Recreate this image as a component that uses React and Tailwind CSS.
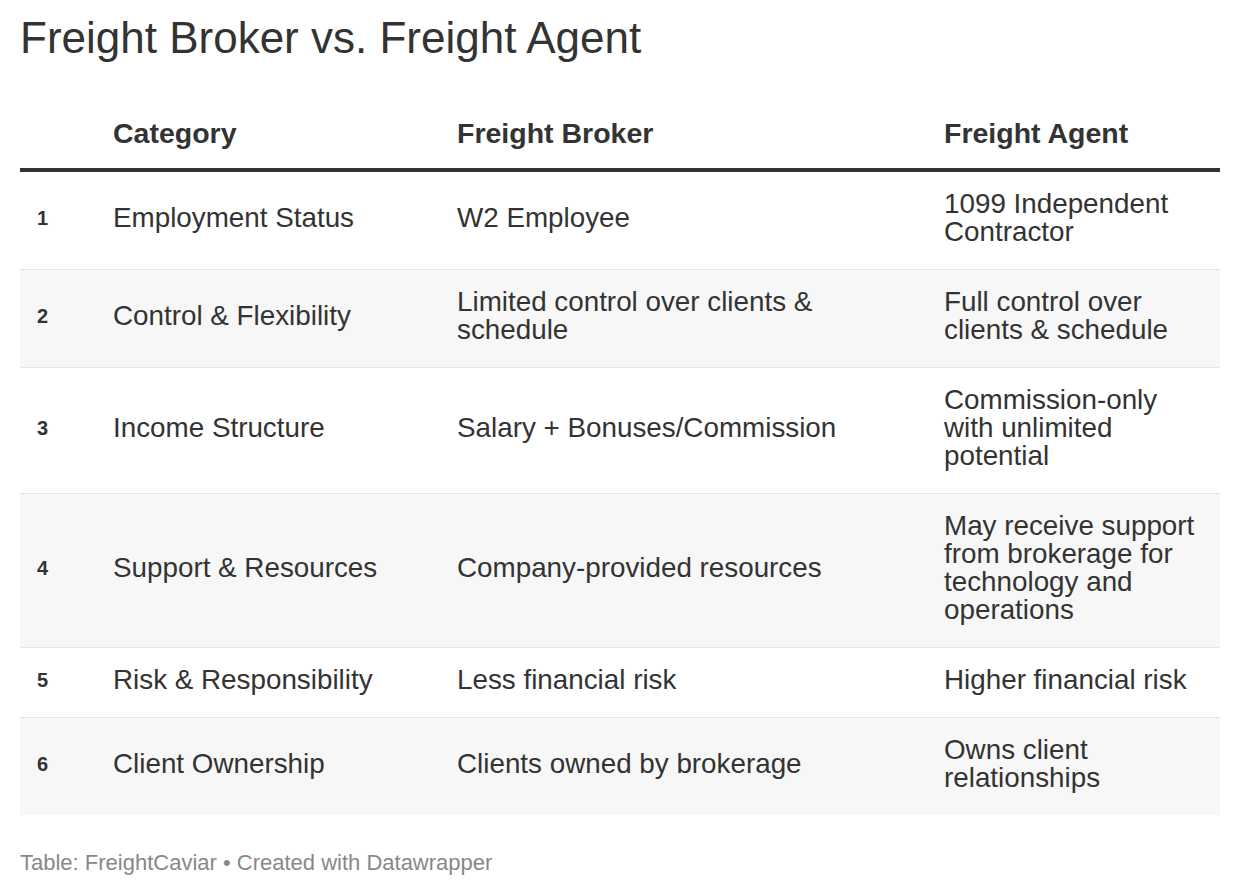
import React from "react";

const rows = [
  ["1", "Employment Status", "W2 Employee", "1099 Independent Contractor"],
  ["2", "Control & Flexibility", "Limited control over clients & schedule", "Full control over clients & schedule"],
  ["3", "Income Structure", "Salary + Bonuses/Commission", "Commission-only with unlimited potential"],
  ["4", "Support & Resources", "Company-provided resources", "May receive support from brokerage for technology and operations"],
  ["5", "Risk & Responsibility", "Less financial risk", "Higher financial risk"],
  ["6", "Client Ownership", "Clients owned by brokerage", "Owns client relationships"],
];

export default function App() {
  return (
    <div className="w-[1240px] h-[896px] bg-white text-[#333] font-['Liberation_Sans',Arial,sans-serif] px-5 pt-[14px]">
      <h1 className="text-[44px] leading-[48px] font-normal text-[#333]">Freight Broker vs. Freight Agent</h1>
      <div className="mt-[57px] w-[1200px]">
        <div className="grid grid-cols-[93px_344px_487px_276px] border-b-4 border-[#333] pb-[21px]">
          <div></div>
          <div className="text-[28.5px] leading-[28px] font-bold">Category</div>
          <div className="text-[28.5px] leading-[28px] font-bold">Freight Broker</div>
          <div className="text-[28.5px] leading-[28px] font-bold">Freight Agent</div>
        </div>
        {rows.map((r, i) => (
          <div
            key={r[0]}
            className={
              "grid grid-cols-[93px_344px_487px_276px] items-center pt-[18px] pb-[23px] text-[27.8px] leading-[28px] " +
              (i % 2 === 1 ? "bg-[#f7f7f7] " : "bg-white ") +
              (i < rows.length - 1 ? "border-b border-[#e6e6e6]" : "")
            }
          >
            <div className="pl-[17px] text-[20px] font-bold">{r[0]}</div>
            <div>{r[1]}</div>
            <div className="pr-[40px]">{r[2]}</div>
            <div className="pr-[14px]">{r[3]}</div>
          </div>
        ))}
      </div>
      <div className="mt-[35px] text-[22px] leading-[26px] text-[#888]">
        Table: FreightCaviar • Created with Datawrapper
      </div>
    </div>
  );
}
